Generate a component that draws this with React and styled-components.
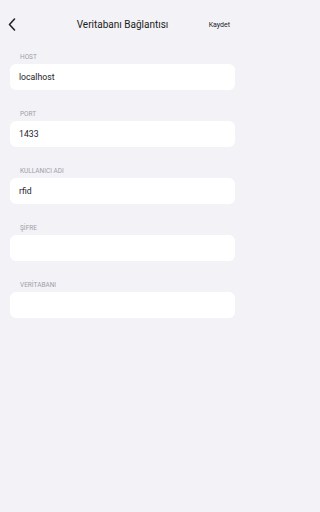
import React from 'react';
import styled, { createGlobalStyle } from 'styled-components';

const GlobalStyle = createGlobalStyle`
  html, body {
    margin: 0;
    padding: 0;
    background: #f2f2f7;
    font-family: Roboto, "Liberation Sans", sans-serif;
  }
`;

const Page = styled.div`
  width: 245px;
  min-height: 512px;
  background: #f2f2f7;
  display: flex;
  flex-direction: column;
`;

const Header = styled.div`
  height: 48px;
  display: grid;
  grid-template-columns: 40px 1fr 40px;
  align-items: center;
`;

const BackButton = styled.div`
  display: flex;
  align-items: center;
  padding-left: 8px;
  padding-top: 1px;
`;

const Title = styled.div`
  text-align: center;
  font-size: 10px;
  font-weight: 400;
  color: #1c1c20;
`;

const SaveButton = styled.div`
  font-size: 7px;
  color: #222226;
  text-align: right;
  padding-right: 15px;
  padding-top: 2px;
`;

const Form = styled.div`
  display: flex;
  flex-direction: column;
  gap: 20px;
  padding: 5px 10px 0;
`;

const Field = styled.div`
  display: flex;
  flex-direction: column;
`;

const Label = styled.div`
  font-size: 6.5px;
  color: #a0a0a8;
  padding-left: 10px;
  height: 11px;
  line-height: 8px;
`;

const Input = styled.div`
  height: 26px;
  background: #ffffff;
  border-radius: 6px;
  display: flex;
  align-items: center;
  padding-left: 9px;
  font-size: 8.7px;
  color: #222226;
`;

const fields = [
  { label: 'HOST', value: 'localhost' },
  { label: 'PORT', value: '1433' },
  { label: 'KULLANICI ADI', value: 'rfid' },
  { label: 'ŞİFRE', value: '' },
  { label: 'VERİTABANI', value: '' },
];

export default function App() {
  return (
    <Page>
      <GlobalStyle />
      <Header>
        <BackButton>
          <svg width="8" height="13" viewBox="0 0 8 13">
            <path d="M6.5 1 L1.5 6.5 L6.5 12" fill="none" stroke="#222226" strokeWidth="1.6" strokeLinecap="round" strokeLinejoin="round" />
          </svg>
        </BackButton>
        <Title>Veritabanı Bağlantısı</Title>
        <SaveButton>Kaydet</SaveButton>
      </Header>
      <Form>
        {fields.map((f) => (
          <Field key={f.label}>
            <Label>{f.label}</Label>
            <Input>{f.value}</Input>
          </Field>
        ))}
      </Form>
    </Page>
  );
}
